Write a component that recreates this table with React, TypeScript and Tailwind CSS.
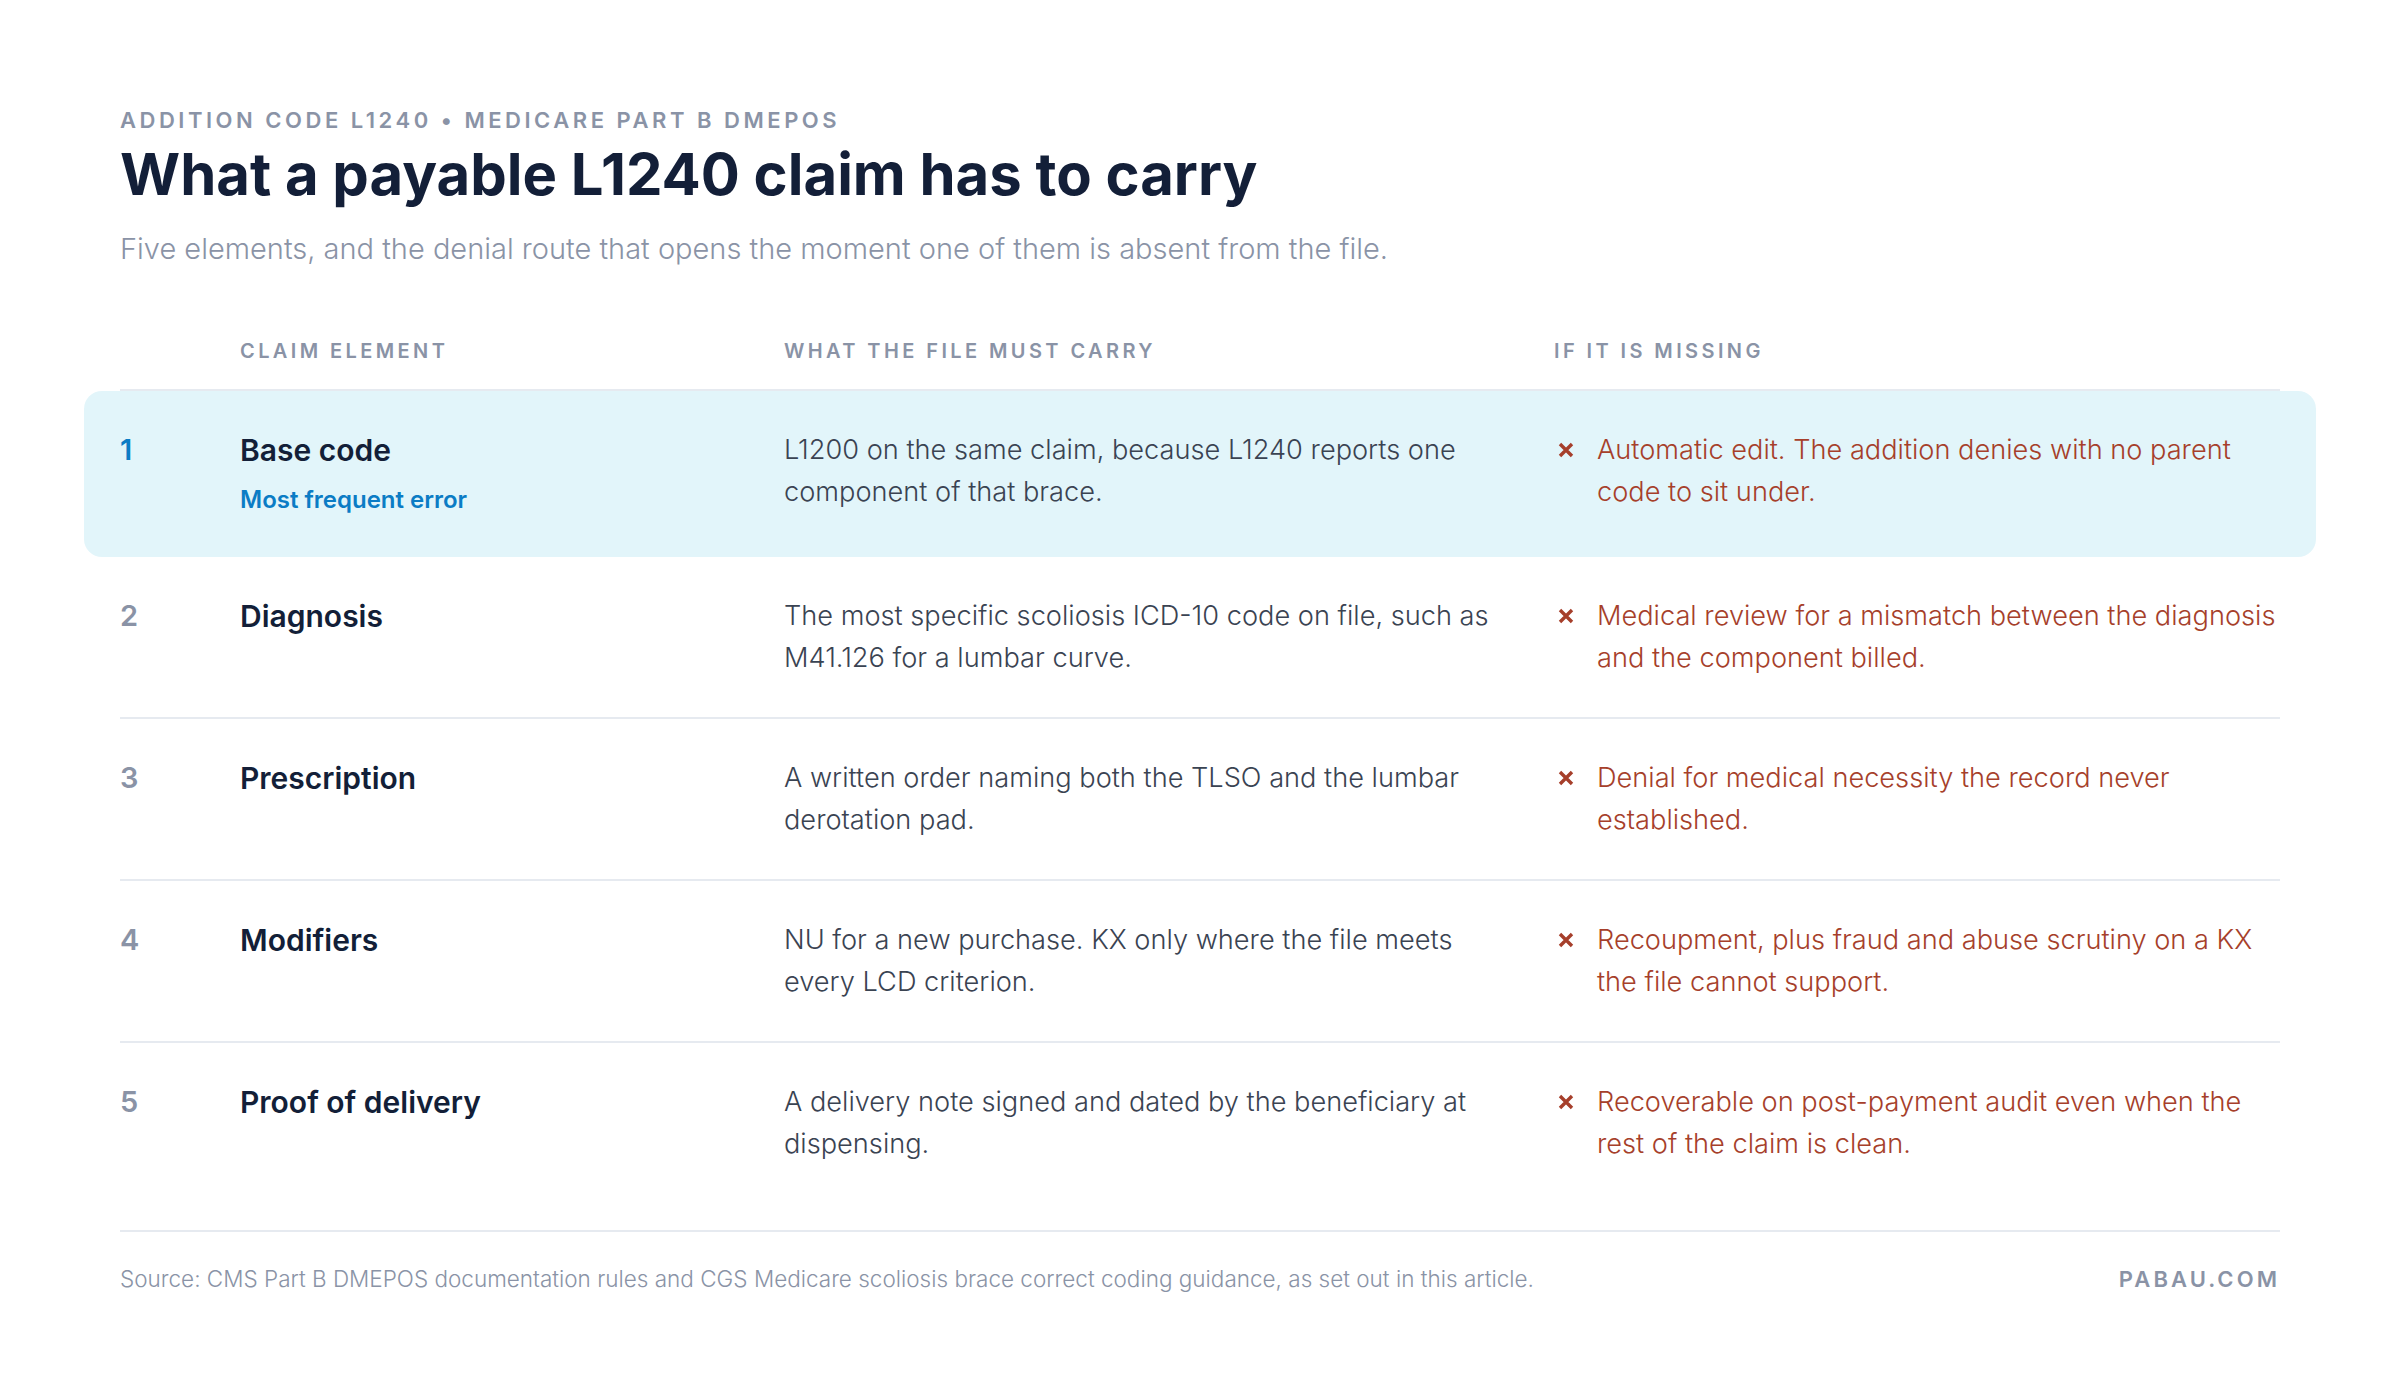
import React from "react"

interface Row {
    n: string
    title: string
    note?: string
    carry: string
    missing: string
}

const rows: Row[] = [
    {
        n: "1",
        title: "Base code",
        note: "Most frequent error",
        carry: "L1200 on the same claim, because L1240 reports one component of that brace.",
        missing: "Automatic edit. The addition denies with no parent code to sit under."
    },
    {
        n: "2",
        title: "Diagnosis",
        carry: "The most specific scoliosis ICD-10 code on file, such as M41.126 for a lumbar curve.",
        missing: "Medical review for a mismatch between the diagnosis and the component billed."
    },
    {
        n: "3",
        title: "Prescription",
        carry: "A written order naming both the TLSO and the lumbar derotation pad.",
        missing: "Denial for medical necessity the record never established."
    },
    {
        n: "4",
        title: "Modifiers",
        carry: "NU for a new purchase. KX only where the file meets every LCD criterion.",
        missing: "Recoupment, plus fraud and abuse scrutiny on a KX the file cannot support."
    },
    {
        n: "5",
        title: "Proof of delivery",
        carry: "A delivery note signed and dated by the beneficiary at dispensing.",
        missing: "Recoverable on post-payment audit even when the rest of the claim is clean."
    }
]

function Cross() {
    return (
        <svg width="18" height="18" viewBox="0 0 18 18" className="shrink-0">
            <path d="M3 3 L15 15 M15 3 L3 15" stroke="#a63f2b" strokeWidth="3.4" strokeLinecap="butt" />
        </svg>
    )
}

export default function App() {
    return (
        <div className="min-h-screen bg-white font-['Inter','Liberation_Sans',sans-serif] px-[120px] pt-[106px] pb-[80px]">
            <div className="text-[22px] leading-[28px] font-semibold tracking-[0.16em] text-[#8a93a6]">
                ADDITION CODE L1240 • MEDICARE PART B DMEPOS
            </div>
            <h1 className="mt-[7px] text-[58px] leading-[66px] font-bold text-[#131f38]">
                What a payable L1240 claim has to carry
            </h1>
            <p className="mt-[24px] text-[29px] leading-[36px] font-light text-[#8a93a6]">
                Five elements, and the denial route that opens the moment one of them is absent from the file.
            </p>

            <div className="mt-[72px] grid grid-cols-[120px_544px_770px_1fr] pb-[26px] border-b-2 border-[#e6eaf0] text-[20px] leading-[24px] font-semibold tracking-[0.17em] text-[#8a93a6]">
                <div />
                <div>CLAIM ELEMENT</div>
                <div>WHAT THE FILE MUST CARRY</div>
                <div>IF IT IS MISSING</div>
            </div>

            <div>
                {rows.map((r, i) => {
                    const hot = i === 0
                    return (
                        <div
                            key={r.n}
                            className={
                                hot
                                    ? "-mx-[36px] px-[36px] rounded-[18px] bg-[#e2f5fa] grid grid-cols-[120px_544px_770px_1fr] pt-[38px] pb-[40px]"
                                    : i < rows.length - 1
                                    ? "grid grid-cols-[120px_544px_770px_1fr] py-[38px] border-b-2 border-[#e6eaf0]"
                                    : "grid grid-cols-[120px_544px_770px_1fr] py-[38px]"
                            }
                        >
                            <div className={"text-[29px] leading-[42px] font-semibold " + (hot ? "text-[#0b7cc5]" : "text-[#8a93a6]")}>
                                {r.n}
                            </div>
                            <div>
                                <div className="text-[30px] leading-[42px] font-semibold text-[#131f38]">{r.title}</div>
                                {r.note && (
                                    <div className="mt-[12px] text-[24px] leading-[34px] font-semibold text-[#0b7cc5]">{r.note}</div>
                                )}
                            </div>
                            <div className="pr-[36px] text-[27.2px] leading-[42px] font-light text-[#3a4352]">{r.carry}</div>
                            <div className="flex gap-[22px] text-[27.2px] leading-[42px] font-light text-[#a63f2b]">
                                <div className="h-[42px] flex items-center pl-[3px]">
                                    <Cross />
                                </div>
                                <div>{r.missing}</div>
                            </div>
                        </div>
                    )
                })}
            </div>

            <div className="mt-[27px] border-t-2 border-[#e6eaf0] pt-[36px] flex items-center justify-between">
                <div className="text-[22.5px] leading-[22px] font-light text-[#8a93a6]">
                    Source: CMS Part B DMEPOS documentation rules and CGS Medicare scoliosis brace correct coding guidance, as set out in this article.
                </div>
                <div className="text-[22px] leading-[22px] font-semibold tracking-[0.14em] text-[#8a93a6]">PABAU.COM</div>
            </div>
        </div>
    )
}
